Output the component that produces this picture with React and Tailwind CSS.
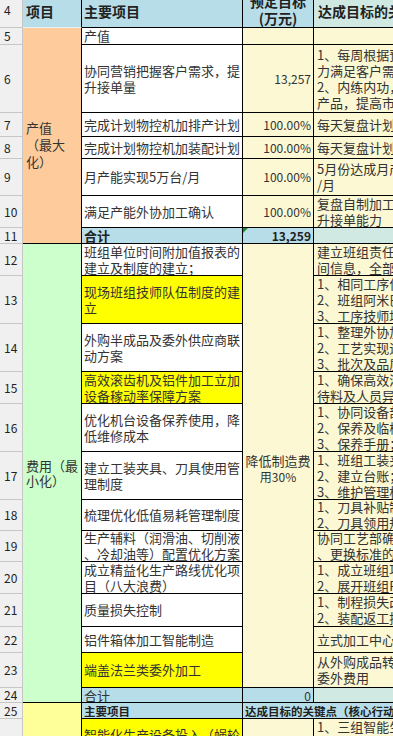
import React from "react"

const rs = [
  "",
  "row-start-1", "row-start-2", "row-start-3", "row-start-4", "row-start-5", "row-start-6",
  "row-start-7", "row-start-8", "row-start-9", "row-start-10", "row-start-11", "row-start-12",
  "row-start-13", "row-start-14", "row-start-15", "row-start-16", "row-start-17", "row-start-18",
  "row-start-19", "row-start-20", "row-start-21", "row-start-22", "row-start-23",
]

const WHITE = "bg-white"
const YELLOW = "bg-[#ffff00]"
const BLUE = "bg-[#b7dee8]"
const CREAM = "bg-[#fbf8d3]"
const LIGHT = "bg-[#d0e9e3]"

// B = 主要项目, C = 预定目标, D = 达成目标的关键点
const body = [
  { g: 2, b: ["产值"], top: true, c: "", d: [] },
  { g: 3, b: ["协同营销把握客户需求，提", "升接单量"], c: "13,257", d: ["1、每周根据预测订单调整产能，", "力满足客户需求；", "2、内练内功，提升质量，开发新", "产品，提高市场占有率"] },
  { g: 4, b: ["完成计划物控机加排产计划"], c: "100.00%", d: ["每天复盘计划达成情况"] },
  { g: 5, b: ["完成计划物控机加装配计划"], c: "100.00%", d: ["每天复盘计划达成情况"] },
  { g: 6, b: ["月产能实现5万台/月"], c: "100.00%", d: ["5月份达成月产能5万台", "/月"] },
  { g: 7, b: ["满足产能外协加工确认"], c: "100.00%", d: ["复盘自制加工能力，提", "升接单能力"] },
  { g: 8, b: ["合计"], top: true, bold: true, bBg: BLUE, c: "13,259", cBg: BLUE, dBg: LIGHT, d: [] },
  { g: 9, b: ["班组单位时间附加值报表的", "建立及制度的建立；"], d: ["建立班组责任制，明确班组时", "间信息，全部公开"] },
  { g: 10, b: ["现场班组技师队伍制度的建", "立"], bBg: YELLOW, d: ["1、相同工序作业标准统一；", "2、班组阿米巴经营；", "3、工序技师培训"] },
  { g: 11, b: ["外购半成品及委外供应商联", "动方案"], d: ["1、整理外协加工清单；", "2、工艺实现途径；", "3、批次及品质管控"] },
  { g: 12, b: ["高效滚齿机及铝件加工立加", "设备稼动率保障方案"], bBg: YELLOW, d: ["1、确保高效滚齿机连续运转，", "待料及人员异常及时处理"] },
  { g: 13, b: ["优化机台设备保养使用，降", "低维修成本"], d: ["1、协同设备部制定计划；", "2、保养及临检记录；", "3、保养手册；"] },
  { g: 14, b: ["建立工装夹具、刀具使用管", "理制度"], d: ["1、班组工装夹具定置；", "2、建立台账；", "3、维护管理标准"] },
  { g: 15, b: ["梳理优化低值易耗管理制度"], d: ["1、刀具补贴制度；", "2、刀具领用规定"] },
  { g: 16, b: ["生产辅料（润滑油、切削液", "、冷却油等）配置优化方案"], d: ["协同工艺部确定用量", "、更换标准的制定"] },
  { g: 17, b: ["成立精益化生产路线优化项", "目（八大浪费）"], d: ["1、成立班组项目小组；", "2、展开班组PDCA"] },
  { g: 18, b: ["质量损失控制"], d: ["1、制程损失改善；", "2、装配返工控制"] },
  { g: 19, b: ["铝件箱体加工智能制造"], d: ["立式加工中心自动化"] },
  { g: 20, b: ["端盖法兰类委外加工"], bBg: YELLOW, d: ["从外购成品转为自制，降低", "委外费用"] },
  { g: 21, b: ["合计"], top: true, bBg: BLUE, c: "0", cBg: BLUE, dBg: LIGHT, d: [] },
]

function Cell({ cls, children }) {
  return <div className={`overflow-hidden flex flex-col ${cls}`}>{children}</div>
}

function Lines({ lines }) {
  return lines.map((t, i) => (
    <div key={i} className="whitespace-nowrap">{t}</div>
  ))
}

export default function App() {
  const heads = []
  for (let g = 1; g <= 23; g++) {
    heads.push(
      <Cell key={"h" + g} cls={`col-start-1 ${rs[g]} bg-[#f0f0f0] border-r border-b border-[#c6c6c6] justify-center pl-[4px] text-[12px] text-[#222]`}>
        {g + 3}
      </Cell>
    )
  }

  return (
    <div className="w-[393px] h-[736px] overflow-hidden bg-white font-['Noto_Sans_CJK_SC',sans-serif] text-[13px] leading-[16px] text-[#333]">
      <div className="-mt-2 grid w-[734px] grid-cols-[23px_59px_161px_71px_420px] grid-rows-[36px_17px_68px_24px_22px_37px_32px_16px_32px_48px_48px_32px_48px_48px_31px_31px_32px_33px_26px_35px_15px_16px_48px]">
        {heads}

        {/* header row */}
        <Cell cls="col-start-2 row-start-1 bg-[#b7dee8] border-r border-b border-r-black border-b-[#e6f2f4] justify-center pl-[3px] pt-[2px] text-[14px] font-bold text-[#222]">
          项目
        </Cell>
        <Cell cls="col-start-3 row-start-1 bg-[#b7dee8] border-r border-b border-black justify-center pl-[2px] pt-[2px] text-[14px] font-bold text-[#222]">
          主要项目
        </Cell>
        <Cell cls="col-start-4 row-start-1 bg-[#b7dee8] border-r border-b border-black justify-center items-center text-[14px] leading-[17px] font-bold text-[#222]">
          <div className="whitespace-nowrap">预定目标</div>
          <div className="whitespace-nowrap">(万元)</div>
        </Cell>
        <Cell cls="col-start-5 row-start-1 bg-[#cfe8e2] border-b border-black justify-center pl-[4px] pt-[2px] text-[14px] font-bold text-[#222]">
          <div className="whitespace-nowrap">达成目标的关键点（核心行动）</div>
        </Cell>

        {/* column A */}
        <Cell cls="col-start-2 row-start-2 bg-[#fdcb9c] border-r border-black" />
        <Cell cls="col-start-2 row-start-3 row-span-6 bg-[#fdcb9c] border-r border-b border-black justify-center pl-[3px] leading-[17px]">
          <div>产值</div>
          <div>（最大</div>
          <div>化）</div>
        </Cell>
        <Cell cls="col-start-2 row-start-9 row-span-13 bg-[#ccffcc] border-r border-b border-black justify-center pl-[3px] leading-[15px]">
          <div className="whitespace-nowrap">费用（最</div>
          <div>小化）</div>
        </Cell>
        <Cell cls="col-start-2 row-start-22 row-span-2 bg-[#ffff99] border-r border-black" />

        {/* B, C, D rows */}
        {body.map((r) => (
          <React.Fragment key={r.g}>
            <Cell cls={`col-start-3 ${rs[r.g]} ${r.bBg || WHITE} border-r border-b border-black pl-[2px] ${r.top ? "justify-start" : "justify-center"} ${r.bold ? "font-bold text-[#222]" : ""}`}>
              <Lines lines={r.b} />
            </Cell>
            {r.c !== undefined && (
              <Cell cls={`col-start-4 ${rs[r.g]} ${r.cBg || CREAM} border-r border-b border-black items-end pr-[2px] text-[12px] ${r.top ? "justify-start" : "justify-center"} ${r.bold ? "font-bold text-[#222]" : ""}`}>
                <div className="relative whitespace-nowrap">{r.c}</div>
              </Cell>
            )}
            <Cell cls={`col-start-5 ${rs[r.g]} ${r.dBg || CREAM} border-b border-black justify-center pl-[3px]`}>
              <Lines lines={r.d} />
            </Cell>
          </React.Fragment>
        ))}

        {/* error marker on the 合计 cell */}
        <div className="col-start-4 row-start-8 relative">
          <div className="absolute left-0 top-0 w-0 h-0 border-t-[5px] border-r-[5px] border-t-[#1e8c2e] border-r-transparent" />
        </div>

        {/* merged C for the cost block */}
        <Cell cls="col-start-4 row-start-9 row-span-12 bg-[#fbf8d3] border-r border-b border-black justify-center items-center pt-[6px]">
          <div className="whitespace-nowrap">降低制造费</div>
          <div className="whitespace-nowrap text-[12px]">用30%</div>
        </Cell>

        {/* row 25 */}
        <Cell cls="col-start-3 row-start-22 bg-[#b7dee8] border-r border-b border-black pl-[2px] text-[11.5px] font-bold text-[#222]">
          主要项目
        </Cell>
        <Cell cls="col-start-4 col-span-2 row-start-22 bg-[#b7dee8] border-b border-black pl-[2px] text-[11.5px] font-bold text-[#222]">
          <div className="whitespace-nowrap">达成目标的关键点（核心行动）</div>
        </Cell>

        {/* row 26 */}
        <Cell cls="col-start-3 row-start-23 bg-[#ffff00] border-r border-b border-black justify-center pl-[2px]">
          <Lines lines={["智能化生产设备投入（蜗轮", "蜗杆自动化生产线）"]} />
        </Cell>
        <Cell cls="col-start-4 row-start-23 bg-[#fbf8d3] border-r border-b border-black" />
        <Cell cls="col-start-5 row-start-23 bg-[#fbf8d3] border-b border-black justify-start pl-[3px]">
          <Lines lines={["1、三组智能生产线调试；", "2、人员培训；", "3、产能提升"]} />
        </Cell>
      </div>
    </div>
  )
}
